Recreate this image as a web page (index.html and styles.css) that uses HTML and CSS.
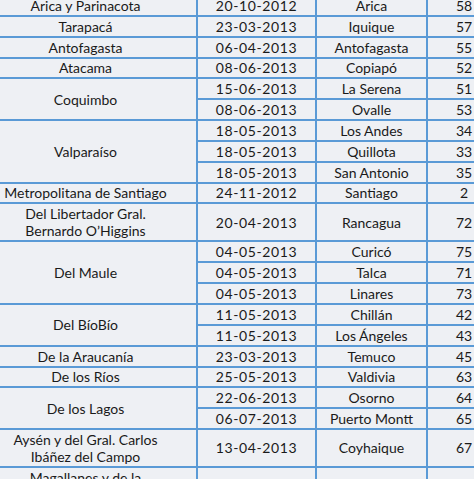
FILE: index.html
```html
<!DOCTYPE html>
<html lang="es">
<head>
<meta charset="utf-8">
<link rel="stylesheet" href="styles.css">
</head>
<body>
<table class="t">
<colgroup><col class="c1"><col class="c2"><col class="c3"><col class="c4"></colgroup>
<tbody>
<tr><td>Arica y Parinacota</td><td class="d">20-10-2012</td><td>Arica</td><td>58</td></tr>
<tr><td>Tarapacá</td><td class="d">23-03-2013</td><td>Iquique</td><td>57</td></tr>
<tr><td>Antofagasta</td><td class="d">06-04-2013</td><td>Antofagasta</td><td>55</td></tr>
<tr><td>Atacama</td><td class="d">08-06-2013</td><td>Copiapó</td><td>52</td></tr>
<tr><td rowspan="2">Coquimbo</td><td class="d">15-06-2013</td><td>La Serena</td><td>51</td></tr>
<tr><td class="d">08-06-2013</td><td>Ovalle</td><td>53</td></tr>
<tr><td rowspan="3">Valparaíso</td><td class="d">18-05-2013</td><td>Los Andes</td><td>34</td></tr>
<tr><td class="d">18-05-2013</td><td>Quillota</td><td>33</td></tr>
<tr><td class="d">18-05-2013</td><td>San Antonio</td><td>35</td></tr>
<tr><td>Metropolitana de Santiago</td><td class="d">24-11-2012</td><td>Santiago</td><td>2</td></tr>
<tr><td>Del Libertador Gral.<br>Bernardo O’Higgins</td><td class="d">20-04-2013</td><td>Rancagua</td><td>72</td></tr>
<tr><td rowspan="3">Del Maule</td><td class="d">04-05-2013</td><td>Curicó</td><td>75</td></tr>
<tr><td class="d">04-05-2013</td><td>Talca</td><td>71</td></tr>
<tr><td class="d">04-05-2013</td><td>Linares</td><td>73</td></tr>
<tr><td rowspan="2">Del BíoBío</td><td class="d">11-05-2013</td><td>Chillán</td><td>42</td></tr>
<tr><td class="d">11-05-2013</td><td>Los Ángeles</td><td>43</td></tr>
<tr><td>De la Araucanía</td><td class="d">23-03-2013</td><td>Temuco</td><td>45</td></tr>
<tr><td>De los Ríos</td><td class="d">25-05-2013</td><td>Valdivia</td><td>63</td></tr>
<tr><td rowspan="2">De los Lagos</td><td class="d">22-06-2013</td><td>Osorno</td><td>64</td></tr>
<tr><td class="d">06-07-2013</td><td>Puerto Montt</td><td>65</td></tr>
<tr><td>Aysén y del Gral. Carlos<br>Ibáñez del Campo</td><td class="d">13-04-2013</td><td>Coyhaique</td><td>67</td></tr>
<tr><td>Magallanes y de la<br>Antártica Chilena</td><td class="d">09-03-2013</td><td>Punta Arenas</td><td>69</td></tr>
</tbody>
</table>
</body>
</html>
```
FILE: styles.css
```css
html, body {
  margin: 0;
  padding: 0;
  background: #ffffff;
  overflow: hidden;
}
.t {
  border-collapse: collapse;
  table-layout: fixed;
  width: 527px;
  margin: -6px 0 0 -27px;
  font-family: Lato, "Open Sans", sans-serif;
  font-size: 14px;
  color: #1a1a1a;
}
.c1 { width: 223px; }
.c2 { width: 119px; }
.c3 { width: 111px; }
.c4 { width: 74px; }
.t td {
  border: 2px solid #5a9ad6;
  background: #eef0f4;
  text-align: center;
  vertical-align: middle;
  line-height: 17.15px;
  padding: 0.85px 0;
  white-space: nowrap;
  overflow: hidden;
}
.t td.d {
  letter-spacing: 0.6px;
}
```
